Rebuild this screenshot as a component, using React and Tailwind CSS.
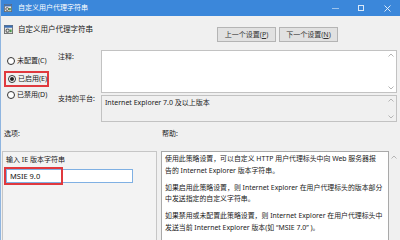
import { useState } from "react";

const font = { fontFamily: '"Noto Sans", "Noto Sans CJK SC", sans-serif' };

function PolicyIcon({ className }) {
  return (
    <svg className={className} viewBox="0 0 10 10">
      <rect x="0.5" y="0.5" width="9" height="9" fill="#e8e8e8" stroke="#6b6b6b" />
      <rect x="0.5" y="0.5" width="9" height="2.5" fill="#3a6fb5" />
      <circle cx="4" cy="6.3" r="1.8" fill="none" stroke="#5a5a5a" strokeWidth="1.2" />
      <rect x="6.3" y="5" width="2.2" height="3" fill="#4c9a4c" />
    </svg>
  );
}

function ScrollArrows({ both = true }) {
  return (
    <div className="flex flex-col justify-between items-center w-[10px] py-[2px]">
      <svg className="w-[6px] h-[4px]" viewBox="0 0 6 4">
        <path d="M0.5 3.5 L3 1 L5.5 3.5" fill="none" stroke="#b5b5b5" />
      </svg>
      {both && (
        <svg className="w-[6px] h-[4px]" viewBox="0 0 6 4">
          <path d="M0.5 0.5 L3 3 L5.5 0.5" fill="none" stroke="#b5b5b5" />
        </svg>
      )}
    </div>
  );
}

function Radio({ label, checked }) {
  return (
    <div className="flex items-center gap-[2px] whitespace-nowrap">
      <span className="w-[8px] h-[8px] shrink-0 rounded-full border border-[#333] bg-white flex items-center justify-center">
        {checked && <span className="w-[4px] h-[4px] rounded-full bg-[#222]" />}
      </span>
      <span>{label}</span>
    </div>
  );
}

export default function App() {
  const [value, setValue] = useState("MSIE 9.0");

  return (
    <div
      className="w-[400px] h-[240px] bg-[#f0f0f0] text-[7px] leading-[10px] text-[#1a1a1a] overflow-hidden flex flex-col border-l border-[#8fb5e0] whitespace-nowrap"
      style={font}
    >
      {/* title bar */}
      <div className="h-[16px] bg-[#3b87da] flex items-center text-white shrink-0">
        <PolicyIcon className="w-[8px] h-[8px] ml-[3px]" />
        <span className="ml-[6px]">自定义用户代理字符串</span>
        <div className="ml-auto flex items-center">
          <span className="w-[26px] flex justify-center">
            <span className="block w-[7px] h-px bg-[#9cc3ec]" />
          </span>
          <span className="w-[26px] flex justify-center">
            <span className="block w-[6px] h-[6px] border border-[#d9e8f8]" />
          </span>
          <span className="w-[26px] flex justify-center">
            <svg className="w-[7px] h-[7px]" viewBox="0 0 7 7">
              <path d="M0.5 0.5 L6.5 6.5 M6.5 0.5 L0.5 6.5" stroke="#eef5fd" strokeWidth="0.9" />
            </svg>
          </span>
        </div>
      </div>

      {/* heading + nav buttons */}
      <div className="flex items-start pl-[3px] pr-[62px] pt-[8px] h-[34px] shrink-0">
        <div className="flex items-center gap-[5px]">
          <PolicyIcon className="w-[9px] h-[9px]" />
          <span className="text-[7.5px]">自定义用户代理字符串</span>
        </div>
        <div className="ml-auto flex gap-[3px] mt-[3px]">
          <button className="w-[59px] h-[15px] bg-[#e1e1e1] border border-[#b4b4b4] text-[#333]">
            上一个设置(<u>P</u>)
          </button>
          <button className="w-[59px] h-[15px] bg-[#e1e1e1] border border-[#b4b4b4] text-[#333]">
            下一个设置(<u>N</u>)
          </button>
        </div>
      </div>

      {/* state + comment/platform */}
      <div className="flex shrink-0">
        <div className="w-[57px] flex flex-col pl-[3px] pt-[4px]">
          <div className="px-[3px] h-[14px] flex items-center">
            <Radio label="未配置(C)" />
          </div>
          <div className="mt-[3px] border-2 border-[#e0393e] px-[2px] h-[16px] w-[45px] flex items-center">
            <Radio label="已启用(E)" checked />
          </div>
          <div className="px-[3px] h-[14px] mt-px flex items-center">
            <Radio label="已禁用(D)" />
          </div>
        </div>
        <div className="flex flex-col">
          <div className="flex">
            <span className="w-[43px] pt-[2px]">注释:</span>
            <div className="w-[296px] h-[43px] bg-white border border-[#c2c2c2] flex justify-end">
              <ScrollArrows />
            </div>
          </div>
          <div className="flex mt-[2px]">
            <span className="w-[43px] -mt-[1px]">支持的平台:</span>
            <div className="w-[296px] h-[27px] bg-[#f0f0f0] border border-[#c2c2c2] flex">
              <span className="pl-[3px] pt-[2px] flex-1">Internet Explorer 7.0 及以上版本</span>
              <ScrollArrows />
            </div>
          </div>
        </div>
      </div>

      {/* section labels */}
      <div className="flex pl-[3px] mt-[7px] h-[10px] shrink-0">
        <span className="w-[158px]">选项:</span>
        <span>帮助:</span>
      </div>

      {/* options + help */}
      <div className="flex flex-1 mt-[12px] pl-px">
        <div className="w-[155px] border-t border-r border-l border-[#c6c6c6] bg-[#f3f3f3] pl-[3px] pt-[3px]">
          <div>输入 IE 版本字符串</div>
          <div className="relative mt-[4px]">
            <input
              value={value}
              onChange={(e) => setValue(e.target.value)}
              className="w-[127px] h-[14px] bg-white border border-[#7fb0e3] px-[3px] text-[7.5px] text-[#111] outline-none"
              style={font}
            />
            <span className="absolute -left-[2px] -top-[2px] w-[59px] h-[18px] border-2 border-[#e0393e] pointer-events-none" />
          </div>
        </div>
        <div className="ml-[4px] w-[228px] bg-white border-t border-r border-l border-[#a9a9a9] px-[3px] pt-[1px] text-[6.9px] leading-[11.5px] overflow-hidden">
          <p>使用此策略设置，可以自定义 HTTP 用户代理标头中向 Web 服务器报</p>
          <p>告的 Internet Explorer 版本字符串。</p>
          <p className="mt-[5.5px]">如果启用此策略设置，则 Internet Explorer 在用户代理标头的版本部分</p>
          <p>中发送指定的自定义字符串。</p>
          <p className="mt-[5.5px]">如果禁用或未配置此策略设置，则 Internet Explorer 在用户代理标头中</p>
          <p>发送当前 Internet Explorer 版本(如 “MSIE 7.0” )。</p>
        </div>
        <div className="w-[10px] flex justify-center pt-[2px]">
          <ScrollArrows both={false} />
        </div>
      </div>
    </div>
  );
}
